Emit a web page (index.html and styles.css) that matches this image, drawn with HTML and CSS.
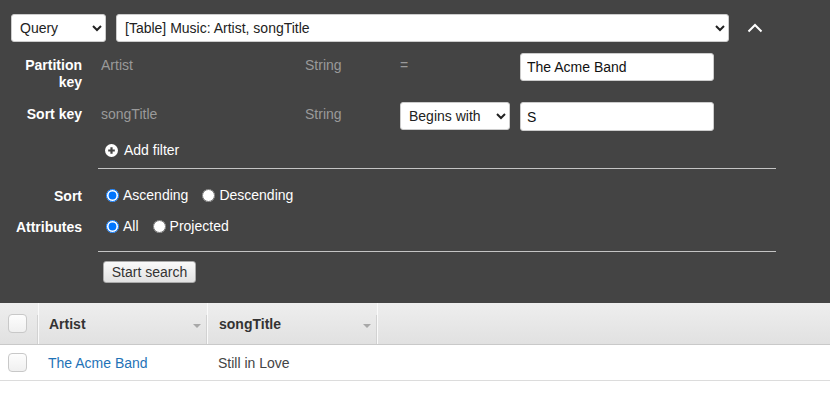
FILE: index.html
```html
<!DOCTYPE html>
<html>
<head>
<meta charset="utf-8">
<link rel="stylesheet" href="styles.css">
</head>
<body>
<div class="panel">
  <div class="topbar">
    <select class="sel sel-mode"><option>Query</option></select>
    <select class="sel sel-table"><option>[Table] Music: Artist, songTitle</option></select>
    <button class="collapse" aria-label="Collapse">
      <svg width="16" height="10" viewBox="0 0 16 10"><polyline points="1.5,8.5 8,2 14.5,8.5" fill="none" stroke="#fff" stroke-width="2"/></svg>
    </button>
  </div>

  <div class="keys">
    <div class="key-row">
      <div class="lbl">Partition<br>key</div>
      <div class="fname">Artist</div>
      <div class="ftype">String</div>
      <div class="fop"><span class="eq">=</span></div>
      <input class="val" type="text" value="The Acme Band">
    </div>
    <div class="key-row">
      <div class="lbl">Sort key</div>
      <div class="fname">songTitle</div>
      <div class="ftype">String</div>
      <div class="fop"><select class="sel sel-op"><option>Begins with</option></select></div>
      <input class="val val-s" type="text" value="S">
    </div>
  </div>

  <div class="addfilter">
    <svg width="13" height="13" viewBox="0 0 13 13"><circle cx="6.5" cy="6.5" r="6.5" fill="#fff"/><path d="M6.5 3.2v6.6M3.2 6.5h6.6" stroke="#444" stroke-width="2.2"/></svg>
    <span>Add filter</span>
  </div>

  <div class="rule"></div>

  <div class="opt-row first">
    <div class="lbl lbl-opt">Sort</div>
    <div class="opts">
      <label class="opt"><input type="radio" name="sort" checked>Ascending</label>
      <label class="opt"><input type="radio" name="sort">Descending</label>
    </div>
  </div>
  <div class="opt-row">
    <div class="lbl lbl-opt">Attributes</div>
    <div class="opts">
      <label class="opt"><input type="radio" name="attr" checked>All</label>
      <label class="opt"><input type="radio" name="attr">Projected</label>
    </div>
  </div>

  <div class="rule rule2"></div>

  <div class="actions">
    <button class="btn">Start search</button>
  </div>
</div>

<div class="grid">
  <div class="ghead">
    <div class="cell c-check"><input class="cb" type="checkbox"></div>
    <div class="cell c-artist hcol"><span>Artist</span><i class="tri"></i></div>
    <div class="cell c-song hcol"><span>songTitle</span><i class="tri"></i></div>
    <div class="cell c-rest hcol"></div>
  </div>
  <div class="grow">
    <div class="cell c-check"><input class="cb" type="checkbox"></div>
    <div class="cell c-artist"><a class="link" href="#">The Acme Band</a></div>
    <div class="cell c-song">Still in Love</div>
    <div class="cell c-rest"></div>
  </div>
</div>
</body>
</html>
```

FILE: styles.css
```css
* { box-sizing: border-box; }
html, body { margin: 0; padding: 0; }
body {
  font-family: "Liberation Sans", Arial, sans-serif;
  font-size: 14px;
  background: #fff;
  color: #222;
  width: 830px;
}

.panel {
  background: #444;
  padding: 14px 0 20px 0;
}

.topbar {
  display: flex;
  align-items: center;
  padding-left: 11px;
  height: 28px;
}
.sel {
  font-family: "Liberation Sans", Arial, sans-serif;
  font-size: 14px;
  color: #222;
  background: #fff;
  border: 1px solid #ccc;
  border-radius: 3px;
  height: 28px;
  padding: 0 4px;
}
.sel-mode { width: 95px; margin-right: 10px; }
.sel-table { width: 613px; }
.collapse {
  margin-left: 16px;
  width: 20px;
  height: 20px;
  padding: 0;
  background: none;
  border: 0;
  display: flex;
  align-items: center;
  justify-content: center;
}

.keys {
  margin-top: 11px;
  display: flex;
  flex-direction: column;
  gap: 11px;
}
.key-row {
  display: flex;
  align-items: flex-start;
}
.lbl {
  width: 101px;
  padding-right: 19px;
  text-align: right;
  color: #fff;
  font-weight: bold;
  line-height: 17px;
  padding-top: 4px;
}
.fname, .ftype {
  color: #9a9a9a;
  line-height: 17px;
  padding-top: 4px;
}
.fname { width: 204px; }
.ftype { width: 95px; }
.fop {
  width: 120px;
  color: #9a9a9a;
  line-height: 17px;
}
.eq { display: block; padding-top: 4px; }
.sel-op { width: 110px; }
.val {
  width: 194px;
  height: 28px;
  border: 1px solid #ccc;
  border-radius: 3px;
  background: #fff;
  font-family: "Liberation Sans", Arial, sans-serif;
  font-size: 14px;
  color: #111;
  padding: 0 6px;
}
.val-s { height: 29px; }

.addfilter {
  margin-top: 11px;
  margin-left: 105px;
  display: flex;
  align-items: center;
  gap: 6px;
  color: #fff;
  line-height: 17px;
}

.rule {
  margin: 9px 0 0 98px;
  width: 678px;
  height: 1px;
  background: #c4c4c4;
}

.opt-row {
  display: flex;
  align-items: flex-start;
  margin-top: 14px;
  height: 17px;
}
.opt-row.first { margin-top: 18px; }
.lbl-opt { padding-top: 1px; }
.opts {
  display: flex;
  align-items: center;
  color: #fff;
  line-height: 17px;
}
.opt {
  display: flex;
  align-items: center;
  margin-right: 9px;
}
.opt input {
  width: 13px;
  height: 13px;
  margin: 0 4px 0 5px;
}
.rule2 { margin-top: 16px; }

.actions {
  display: flex;
  margin: 9px 0 0 103px;
}
.btn {
  font-family: "Liberation Sans", Arial, sans-serif;
  font-size: 14px;
  color: #333;
  height: 22px;
  width: 93px;
  padding: 0 4px;
  white-space: nowrap;
  border: 1px solid #aaa;
  border-radius: 3px;
  background: linear-gradient(#fafafa, #e2e2e2);
}

.grid { width: 830px; }
.ghead {
  display: flex;
  height: 42px;
  background: linear-gradient(#eeeeee, #e1e1e1);
  border-bottom: 1px solid #c9c9c9;
}
.grow {
  display: flex;
  height: 36px;
  border-bottom: 1px solid #dcdcdc;
}
.cell {
  display: flex;
  align-items: center;
  position: relative;
}
.c-check { width: 38px; padding-left: 8px; }
.c-artist { width: 169px; padding-left: 10px; }
.c-song { width: 170px; padding-left: 11px; color: #444; }
.c-rest { flex: 1; }

.hcol {
  border-left: 1px solid #fafafa;
  font-weight: bold;
  color: #333;
}
.hcol::before {
  content: "";
  position: absolute;
  left: -2px;
  top: 12px;
  bottom: 0;
  width: 1px;
  background: #d2d2d2;
}
.ghead .c-artist { padding-left: 10px; }
.ghead .c-song { padding-left: 11px; }
.tri {
  position: absolute;
  right: 6px;
  top: 21px;
  width: 0;
  height: 0;
  border-left: 4px solid transparent;
  border-right: 4px solid transparent;
  border-top: 4px solid #a8a8a8;
}

.cb {
  appearance: none;
  -webkit-appearance: none;
  margin: 0;
  width: 19px;
  height: 19px;
  border: 1px solid #c8c8c8;
  border-radius: 4px;
  background: linear-gradient(#fdfdfd, #f0f0f0);
}

.link {
  color: #1f73b7;
  text-decoration: none;
}
```
